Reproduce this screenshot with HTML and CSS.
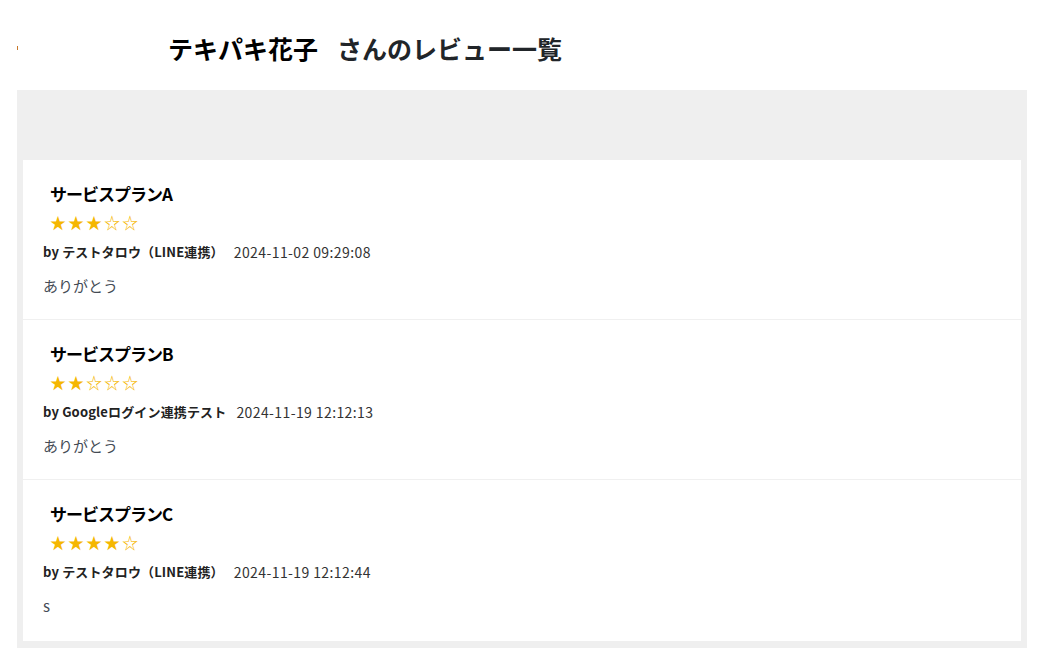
FILE: index.html
```html
<!DOCTYPE html>
<html lang="ja">
<head>
<meta charset="utf-8">
<title>テキパキ花子 さんのレビュー一覧</title>
<link rel="stylesheet" href="styles.css">
</head>
<body>
<div class="page">
  <header class="head">
    <span class="avatar" aria-hidden="true"></span>
    <h1 class="title"><span class="name">テキパキ花子</span><span class="suffix">さんのレビュー一覧</span></h1>
  </header>
  <section class="panel">
    <div class="panel-top"></div>
    <div class="list">
      <article class="review">
        <h2 class="plan">サービスプランA</h2>
        <div class="stars"><span class="on">★★★</span><span class="off">☆☆</span></div>
        <div class="meta"><span class="by">by テストタロウ（LINE連携）</span><span class="date">2024-11-02 09:29:08</span></div>
        <p class="body">ありがとう</p>
      </article>
      <article class="review">
        <h2 class="plan">サービスプランB</h2>
        <div class="stars"><span class="on">★★</span><span class="off">☆☆☆</span></div>
        <div class="meta"><span class="by">by Googleログイン連携テスト</span><span class="date">2024-11-19 12:12:13</span></div>
        <p class="body">ありがとう</p>
      </article>
      <article class="review">
        <h2 class="plan">サービスプランC</h2>
        <div class="stars"><span class="on">★★★★</span><span class="off">☆</span></div>
        <div class="meta"><span class="by">by テストタロウ（LINE連携）</span><span class="date">2024-11-19 12:12:44</span></div>
        <p class="body">s</p>
      </article>
    </div>
  </section>
</div>
</body>
</html>
```

FILE: styles.css
```css
html, body {
  margin: 0;
  padding: 0;
  background: #ffffff;
}
body {
  font-family: "Noto Sans CJK JP", "Noto Sans", sans-serif;
  color: #333;
}
.page {
  padding: 0 16px 0 17px;
}
.head {
  height: 90px;
  display: flex;
  align-items: center;
  padding-top: 6px;
  box-sizing: border-box;
}
.avatar {
  width: 1px;
  height: 4px;
  background: #c8782a;
  flex: none;
}
.title {
  margin: 0 0 0 150px;
  font-size: 25px;
  line-height: 34px;
  font-weight: 700;
  display: flex;
  gap: 19px;
}
.name {
  color: #000;
}
.suffix {
  color: #212529;
}
.panel {
  background: #efefef;
  padding: 0 6px 7px 6px;
}
.panel-top {
  height: 70px;
}
.list {
  background: #fff;
}
.review {
  padding: 22px 20px 22px 20px;
  border-bottom: 1px solid #f0f0f0;
}
.review:last-child {
  border-bottom: none;
  padding-bottom: 24px;
}
.plan {
  margin: 0 0 4px 7px;
  font-size: 17px;
  letter-spacing: -1px;
  line-height: 24px;
  font-weight: 700;
  color: #000;
}
.stars {
  margin-left: 7px;
  font-size: 16px;
  letter-spacing: 2px;
  line-height: 24px;
  height: 24px;
  color: #f5b700;
}
.meta {
  margin-top: 8px;
  height: 20px;
  font-size: 13px;
  line-height: 20px;
  display: flex;
  align-items: center;
  gap: 10px;
}
.by {
  font-weight: 700;
  color: #222;
  letter-spacing: 0.15px;
  line-height: 20px;
}
.date {
  color: #333;
  font-size: 14px;
  line-height: 20px;
  letter-spacing: 0.4px;
}
.body {
  margin: 13px 0 0 0;
  font-size: 15px;
  line-height: 22px;
  color: #444b55;
}
```
